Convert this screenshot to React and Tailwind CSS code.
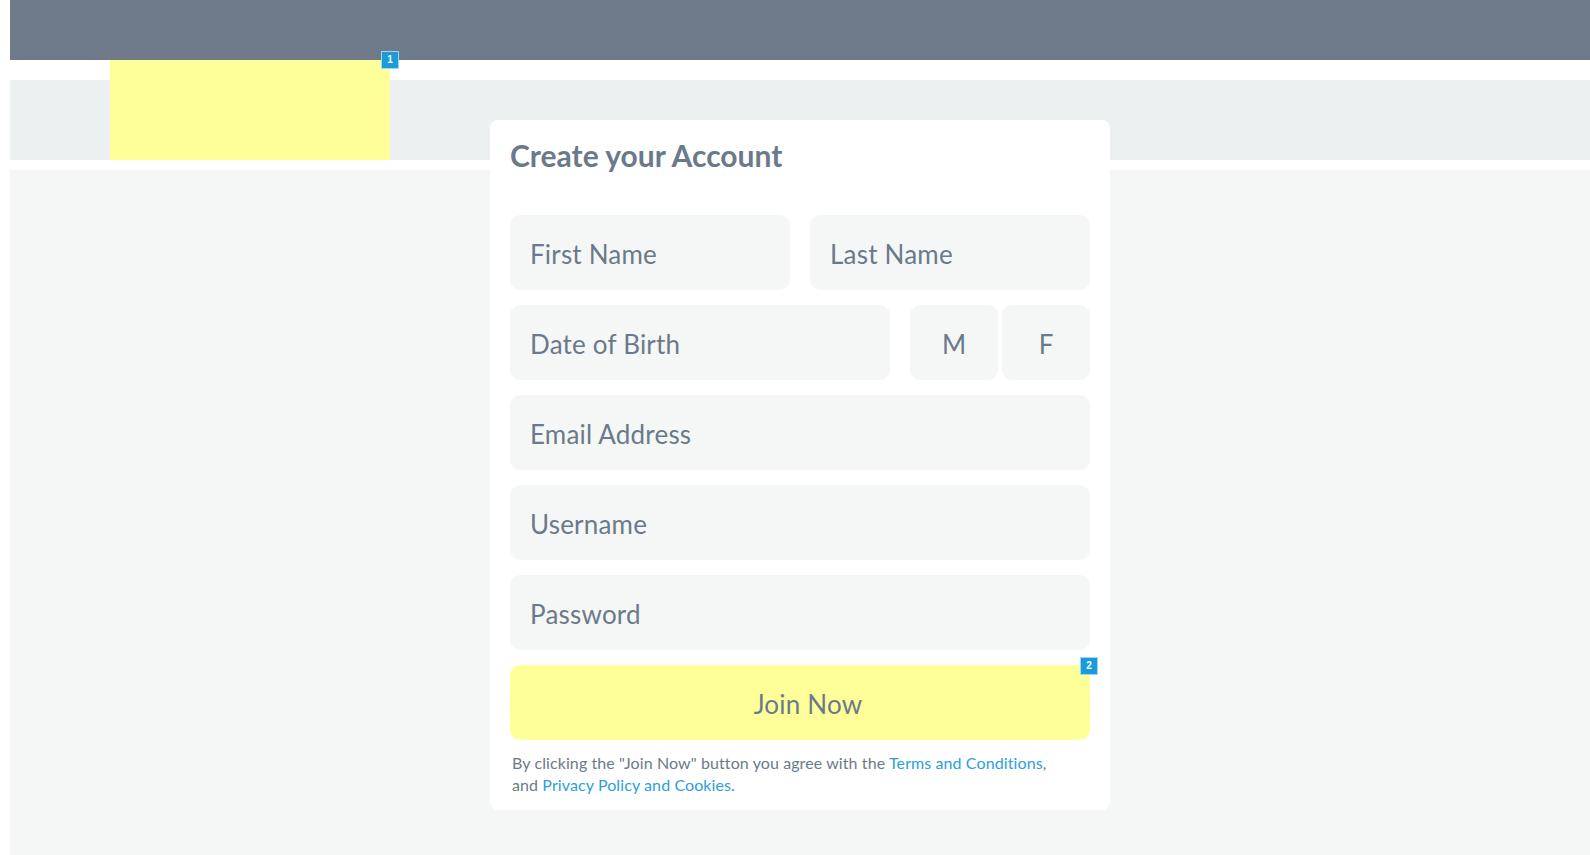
import React from 'react';

const Badge = ({ n, className }) => (
  <span
    className={`absolute flex items-center justify-center w-[18px] h-[18px] bg-[#1b9bd8] border border-[#9fd8f2] text-white text-[10px] font-bold leading-none z-20 ${className}`}
    style={{ fontFamily: '"Liberation Sans", Arial, sans-serif' }}
  >
    {n}
  </span>
);

const Field = ({ placeholder, type = 'text', className = '' }) => (
  <input
    type={type}
    placeholder={placeholder}
    className={`h-[75px] rounded-[10px] bg-[#f5f7f7] px-[20px] pt-[2px] text-[26px] tracking-[0.2px] text-[#6b7a8a] placeholder:text-[#6b7a8a] outline-none ${className}`}
  />
);

const App = () => {
  return (
    <div
      className="min-h-screen bg-white pl-[10px] flex flex-col"
      style={{ fontFamily: 'Lato, "Open Sans", sans-serif' }}
    >
      <header className="h-[60px] bg-[#6e7a8a]" />

      <div className="relative pt-[20px]">
        <div className="h-[80px] bg-[#ecf0f1]" />
        <div className="absolute left-[100px] top-0 w-[280px] h-[100px] bg-[#ffff99]">
          <Badge n="1" className="-top-[9px] -right-[9px]" />
        </div>
      </div>

      <main className="flex-1 mt-[10px] bg-[#f5f7f7] pb-[45px]">
        <div className="relative z-10 -mt-[50px] mx-auto w-[620px] bg-white rounded-[8px] px-[20px] pt-[17px] pb-[14px]">
          <h1 className="text-[30px] leading-[36px] font-bold text-[#6b7a8a] mb-[42px]">
            Create your Account
          </h1>

          <form className="flex flex-col gap-[15px]" onSubmit={(e) => e.preventDefault()}>
            <div className="flex gap-[20px]">
              <Field placeholder="First Name" className="w-[280px]" />
              <Field placeholder="Last Name" className="w-[280px]" />
            </div>
            <div className="flex">
              <Field placeholder="Date of Birth" className="w-[380px]" />
              <div className="flex gap-[4px] ml-[20px]">
                <button type="button" className="w-[88px] h-[75px] pt-[3px] rounded-[10px] bg-[#f5f7f7] text-[26px] text-[#6b7a8a]">
                  M
                </button>
                <button type="button" className="w-[88px] h-[75px] pt-[3px] rounded-[10px] bg-[#f5f7f7] text-[26px] text-[#6b7a8a]">
                  F
                </button>
              </div>
            </div>
            <Field placeholder="Email Address" type="email" className="w-full" />
            <Field placeholder="Username" className="w-full" />
            <Field placeholder="Password" type="password" className="w-full" />
            <div className="relative">
              <button type="submit" className="w-full h-[75px] pl-[16px] pt-[3px] rounded-[10px] bg-[#ffff99] text-[26px] tracking-[0.2px] text-[#6b7a8a]">
                Join Now
              </button>
              <Badge n="2" className="-top-[8px] -right-[8px]" />
            </div>
          </form>

          <p className="mt-[12px] pl-[2px] text-[16px] leading-[22px] tracking-[0.1px] text-[#6b7a8a]">
            By clicking the "Join Now" button you agree with the{' '}
            <a href="#" className="text-[#2c9fd9]">Terms and Conditions</a>,
            <br />
            and <a href="#" className="text-[#2c9fd9]">Privacy Policy and Cookies</a>.
          </p>
        </div>
      </main>
    </div>
  );
};

export default App;
